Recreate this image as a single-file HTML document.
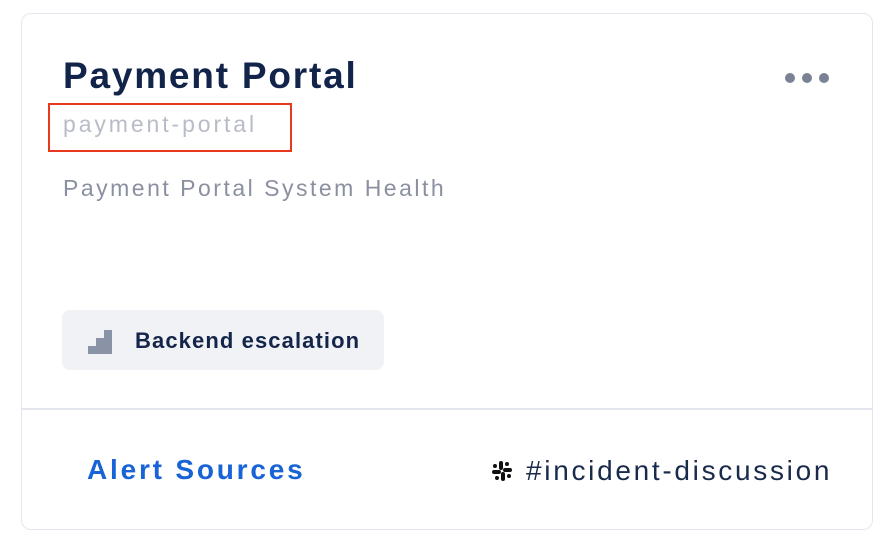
<!DOCTYPE html>
<html><head><meta charset="utf-8"><style>
body{margin:0;width:894px;height:552px;background:#fff;font-family:"Liberation Sans",sans-serif;position:relative;overflow:hidden}
.card{position:absolute;left:21px;top:13px;width:850px;height:515px;border:1.5px solid #e3e6ee;border-radius:10px}
.abs{position:absolute;white-space:nowrap}
</style></head><body>
<div class="card"></div>
<div class="abs" style="left:63px;top:55px;font-size:37px;font-weight:bold;color:#12244a;letter-spacing:1.8px">Payment Portal</div>
<div class="abs" style="left:48px;top:103px;width:240px;height:45px;border:2px solid #e8391f"></div>
<div class="abs" style="left:63px;top:111px;font-size:23px;color:#b8bcc8;letter-spacing:2.9px">payment-portal</div>
<div class="abs" style="left:63px;top:175px;font-size:23px;color:#8a90a0;letter-spacing:2.5px">Payment Portal System Health</div>
<div class="abs" style="left:785px;top:73px;width:10px;height:10px;border-radius:50%;background:#7a8295"></div>
<div class="abs" style="left:802px;top:73px;width:10px;height:10px;border-radius:50%;background:#7a8295"></div>
<div class="abs" style="left:819px;top:73px;width:10px;height:10px;border-radius:50%;background:#7a8295"></div>
<div class="abs" style="left:62px;top:310px;width:322px;height:60px;background:#f1f2f5;border-radius:8px"></div>
<svg class="abs" style="left:88px;top:330px" width="25" height="24"><path d="M0 24V16H8V8H16V0H24V24Z" fill="#8a92a6"/></svg>
<div class="abs" style="left:135px;top:328px;font-size:22px;font-weight:bold;color:#14254a;letter-spacing:1.1px">Backend escalation</div>
<div class="abs" style="left:22px;top:408px;width:850px;height:1.5px;background:#e3e6ee"></div>
<div class="abs" style="left:87px;top:454px;font-size:28px;font-weight:bold;color:#1863d6;letter-spacing:2.8px">Alert Sources</div>
<svg class="abs" style="left:491px;top:460px" width="22" height="22" viewBox="0 0 22 22" fill="#111">
<rect x="8" y="1" width="4" height="9" rx="2"/><rect x="12" y="8" width="9" height="4" rx="2"/><rect x="10" y="12" width="4" height="9" rx="2"/><rect x="1" y="10" width="9" height="4" rx="2"/>
<circle cx="16" cy="4" r="2"/><circle cx="18" cy="16" r="2"/><circle cx="6" cy="18" r="2"/><circle cx="4" cy="6" r="2"/></svg>
<div class="abs" style="left:526px;top:455px;font-size:28px;color:#1a2a4a;letter-spacing:2.7px">#incident-discussion</div>
</body></html>
